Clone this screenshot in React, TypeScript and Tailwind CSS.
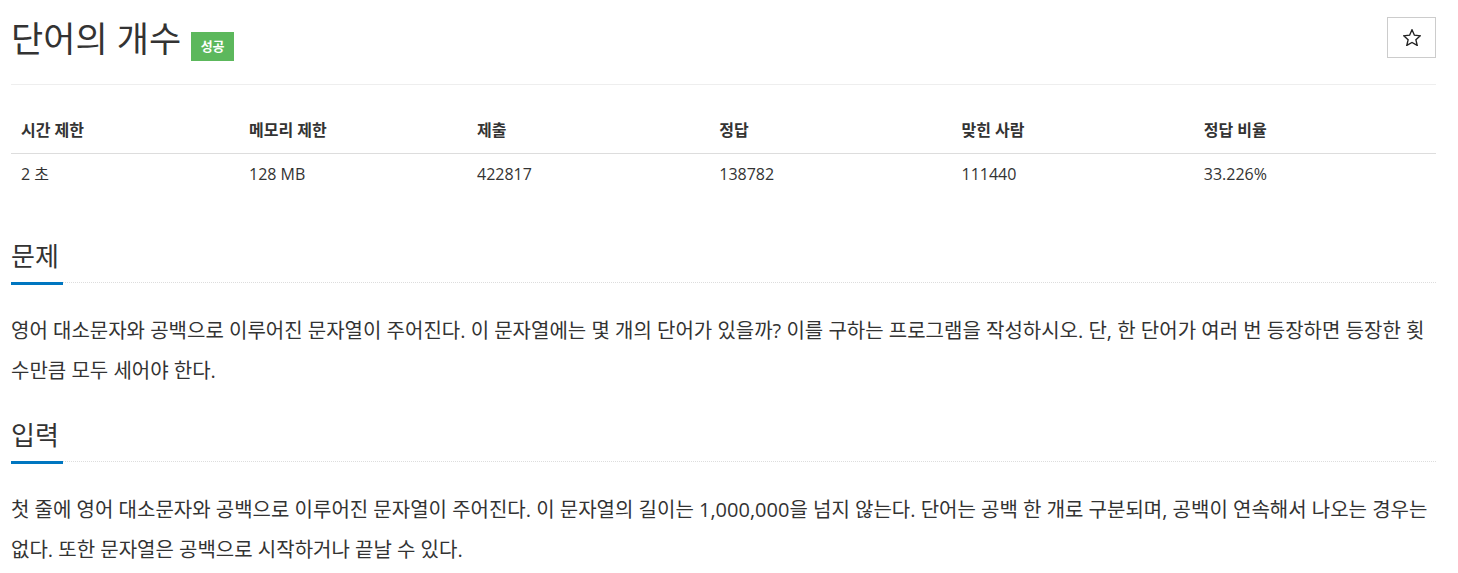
const stats = [
    { title: '시간 제한', value: '2 초', width: 'w-[16%]' },
    { title: '메모리 제한', value: '128 MB', width: 'w-[16%]' },
    { title: '제출', value: '422817', width: 'w-[17%]' },
    { title: '정답', value: '138782', width: 'w-[17%]' },
    { title: '맞힌 사람', value: '111440', width: 'w-[17%]' },
    { title: '정답 비율', value: '33.226%', width: 'w-[17%]' },
];

const sections = [
    {
        title: '문제',
        body: '영어 대소문자와 공백으로 이루어진 문자열이 주어진다. 이 문자열에는 몇 개의 단어가 있을까? 이를 구하는 프로그램을 작성하시오. 단, 한 단어가 여러 번 등장하면 등장한 횟수만큼 모두 세어야 한다.',
    },
    {
        title: '입력',
        body: '첫 줄에 영어 대소문자와 공백으로 이루어진 문자열이 주어진다. 이 문자열의 길이는 1,000,000을 넘지 않는다. 단어는 공백 한 개로 구분되며, 공백이 연속해서 나오는 경우는 없다. 또한 문자열은 공백으로 시작하거나 끝날 수 있다.',
    },
];

const Section = ({ title, body, first }: { title: string; body: string; first: boolean }) => (
    <section className={first ? 'mt-[46px]' : 'mt-[28px]'}>
        {/* 제목 + 밑줄 */}
        <div className="flex border-b border-dotted border-[#dddddd]">
            <h2 className="-mb-[3px] border-b-[3px] border-[#0076c0] pr-[4px] pb-[10px] text-[26px] leading-[32px] font-normal text-[#333333]">
                {title}
            </h2>
        </div>
        <p className="mt-[28px] text-[20px] leading-[40px] text-[#333333]">{body}</p>
    </section>
);

const App = () => {
    return (
        <div className="min-h-screen bg-white pr-[22px] pl-[11px] font-['Open_Sans','Noto_Sans_CJK_KR',sans-serif] text-[#333333]">
            {/* 문제 제목 */}
            <div className="flex h-[85px] items-start justify-between border-b border-[#eeeeee] pt-[17px]">
                <div className="flex items-end">
                    <h1 className="text-[35px] leading-[44px] font-normal text-[#333333]">단어의 개수</h1>
                    <span className="ml-[10px] flex h-[29px] w-[43px] items-center justify-center bg-[#5cb85c] text-[13px] font-bold text-white">
                        성공
                    </span>
                </div>
                <button className="flex h-[41px] w-[49px] items-center justify-center border border-[#cccccc] bg-white">
                    <svg width="18" height="17" viewBox="0 0 18 17" fill="none" stroke="#222222" strokeWidth="1.4" strokeLinejoin="miter">
                        <polygon points="9,0.8 11.4,6.2 17.3,6.8 12.9,10.8 14.2,16.4 9,13.5 3.8,16.4 5.1,10.8 0.7,6.8 6.6,6.2" />
                    </svg>
                </button>
            </div>

            {/* 제한 / 통계 */}
            <table className="mt-[25px] w-full table-fixed border-collapse text-[16px]">
                <thead>
                    <tr className="border-b border-[#dddddd]">
                        {stats.map((s) => (
                            <th key={s.title} className={`${s.width} pt-[10px] pb-[13px] pl-[10px] text-left leading-[20px] font-bold`}>
                                {s.title}
                            </th>
                        ))}
                    </tr>
                </thead>
                <tbody>
                    <tr>
                        {stats.map((s) => (
                            <td key={s.title} className="py-[10px] pl-[10px] leading-[20px]">
                                {s.value}
                            </td>
                        ))}
                    </tr>
                </tbody>
            </table>

            {sections.map((s, i) => (
                <Section key={s.title} title={s.title} body={s.body} first={i === 0} />
            ))}
        </div>
    );
};

export default App;
